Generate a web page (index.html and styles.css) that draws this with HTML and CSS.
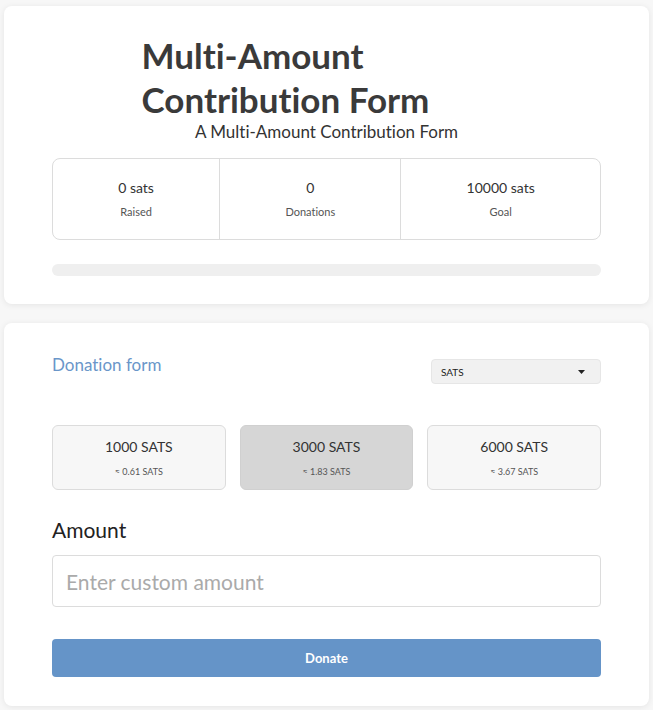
FILE: index.html
```html
<!DOCTYPE html>
<html lang="en">
<head>
<meta charset="utf-8">
<title>Multi-Amount Contribution Form</title>
<link rel="stylesheet" href="styles.css">
</head>
<body>
<main class="page">
  <section class="card card-top">
    <header class="head">
      <h1 class="title">Multi-Amount Contribution Form</h1>
      <p class="subtitle">A Multi-Amount Contribution Form</p>
    </header>
    <div class="stats">
      <div class="stat"><div class="stat-value">0 sats</div><div class="stat-label">Raised</div></div>
      <div class="stat"><div class="stat-value">0</div><div class="stat-label">Donations</div></div>
      <div class="stat"><div class="stat-value">10000 sats</div><div class="stat-label">Goal</div></div>
    </div>
    <div class="progress"><div class="progress-fill" style="width:0%"></div></div>
  </section>

  <section class="card card-form">
    <div class="form-head">
      <h2 class="form-title">Donation form</h2>
      <div class="select">
        <span>SATS</span>
        <svg class="caret" width="7" height="4" viewBox="0 0 7 4"><path d="M0 0h7L3.5 4z" fill="#222"/></svg>
      </div>
    </div>
    <div class="amounts">
      <button class="amount" type="button"><span class="amount-main">1000 SATS</span><span class="amount-sub">≈ 0.61 SATS</span></button>
      <button class="amount is-active" type="button"><span class="amount-main">3000 SATS</span><span class="amount-sub">≈ 1.83 SATS</span></button>
      <button class="amount" type="button"><span class="amount-main">6000 SATS</span><span class="amount-sub">≈ 3.67 SATS</span></button>
    </div>
    <label class="field-label" for="amt">Amount</label>
    <input class="field" id="amt" type="text" placeholder="Enter custom amount">
    <button class="donate" type="button">Donate</button>
  </section>
</main>
</body>
</html>
```

FILE: styles.css
```css
* { box-sizing: border-box; }
html, body { margin: 0; padding: 0; }
body {
  background: #f7f7f7;
  font-family: "Lato", "Liberation Sans", sans-serif;
  font-variant-ligatures: none;
  color: #333;
}
.page {
  padding: 6px 4px 5px;
  display: flex;
  flex-direction: column;
  gap: 19px;
}
.card {
  background: #fff;
  border-radius: 8px;
  box-shadow: 0 1px 6px rgba(0,0,0,0.08);
  padding: 0 48px;
}
.card-top { padding-top: 27px; padding-bottom: 28px; }
.head { margin-bottom: 15px; }
.title {
  max-width: 370px;
  margin: 0 auto;
  font-size: 35px;
  line-height: 44px;
  font-weight: 700;
  color: #3a3a3a;
}
.subtitle {
  margin: 0;
  text-align: center;
  font-size: 17px;
  line-height: 22px;
  color: #333;
}
.stats {
  display: flex;
  border: 1px solid #dcdcdc;
  border-radius: 8px;
  height: 82px;
}
.stat {
  flex: 1 1 auto;
  display: flex;
  flex-direction: column;
  align-items: center;
  justify-content: center;
  gap: 8px;
  padding: 0 10px;
}
.stat + .stat { border-left: 1px solid #dcdcdc; }
.stat-value { font-size: 14px; line-height: 18px; color: #333; }
.stat-label { font-size: 11px; line-height: 14px; color: #555; }
.progress {
  margin-top: 24px;
  height: 12px;
  border-radius: 6px;
  background: #efefef;
  overflow: hidden;
}
.progress-fill { height: 100%; background: #6594c8; }

.card-form { padding-top: 31px; padding-bottom: 29px; }
.form-head {
  display: flex;
  justify-content: space-between;
  align-items: flex-start;
}
.form-title {
  margin: 0;
  font-size: 17px;
  line-height: 22px;
  font-weight: 400;
  color: #6a96c9;
}
.select {
  margin-top: 5px;
  width: 170px;
  height: 25px;
  display: flex;
  align-items: center;
  justify-content: space-between;
  padding: 0 15px 0 9px;
  background: #f1f1f1;
  border: 1px solid #e6e6e6;
  border-radius: 4px;
  font-size: 10px;
  color: #222;
}
.amounts {
  margin-top: 41px;
  display: grid;
  grid-template-columns: repeat(3, 1fr);
  gap: 14px;
}
.amount {
  height: 65px;
  display: flex;
  flex-direction: column;
  align-items: center;
  justify-content: center;
  gap: 10px;
  background: #f7f7f7;
  border: 1px solid #dcdcdc;
  border-radius: 6px;
  font-family: inherit;
  padding: 0;
}
.amount.is-active { background: #d6d6d6; border-color: #d0d0d0; }
.amount-main { font-size: 14px; line-height: 18px; color: #333; }
.amount-sub { font-size: 9px; line-height: 12px; color: #555; }
.field-label {
  display: block;
  margin-top: 27px;
  font-size: 21px;
  line-height: 25px;
  color: #222;
}
.field {
  display: block;
  width: 100%;
  margin-top: 13px;
  height: 52px;
  border: 1px solid #dcdcdc;
  border-radius: 4px;
  padding: 0 13px;
  font-family: inherit;
  font-size: 21px;
  color: #333;
  background: #fff;
}
.field::placeholder { color: #aaa; }
.donate {
  display: block;
  width: 100%;
  margin-top: 32px;
  height: 38px;
  border: 0;
  border-radius: 4px;
  background: #6594c8;
  color: #fff;
  font-family: inherit;
  font-weight: 700;
  font-size: 13px;
}
```
